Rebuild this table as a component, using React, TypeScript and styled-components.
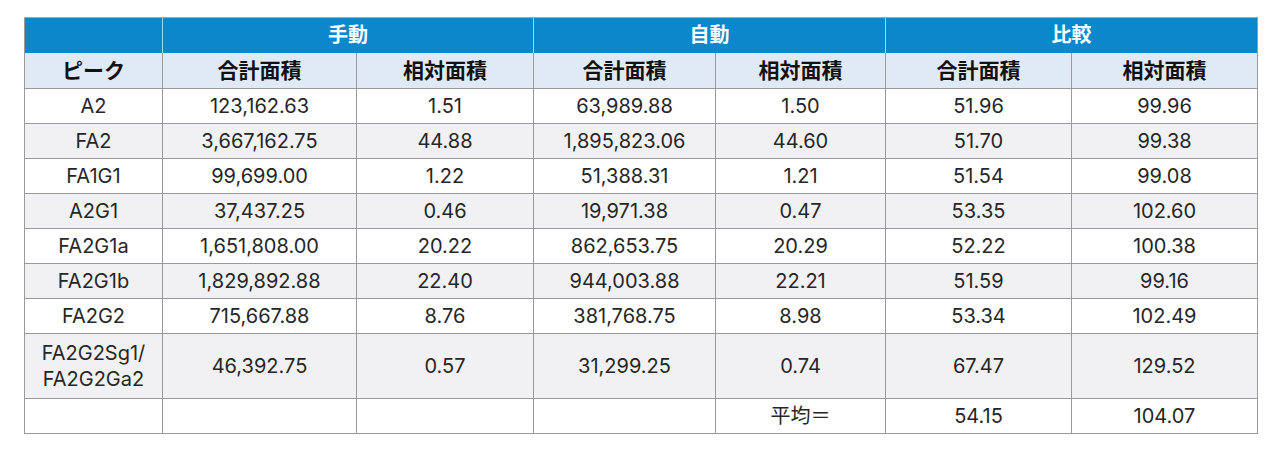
import * as React from 'react';
import styled, { createGlobalStyle } from 'styled-components';

const GlobalStyle = createGlobalStyle`
    body {
        margin: 0;
        background: white;
        font-family: Inter, 'Noto Sans CJK JP', sans-serif;
        color: #222;
    }
`;

const Page = styled.div`
    padding: 17px 0 0 24px;
`;

const Table = styled.table`
    border-collapse: collapse;
    table-layout: fixed;
    width: 1233px;
    font-size: 20px;
`;

const GroupRow = styled.tr`
    height: 35px;
    background: #0a88cb;
`;

const GroupCell = styled.th`
    color: white;
    font-weight: 700;
    font-size: 20px;
    border-left: 1px solid #8fe0f5;
    border-top: 1px solid #7fb4d4;
    padding: 0;
    line-height: 1;
    &:first-child {
        border-left: 1px solid #9a9a9a;
    }
    &:last-child {
        border-right: 1px solid #9a9a9a;
    }
`;

const SubRow = styled.tr`
    height: 36px;
    background: #dfeaf6;
`;

const SubCell = styled.th`
    font-weight: 700;
    font-size: 21px;
    line-height: 1;
    color: #111;
    border: 1px solid #9a9a9a;
    border-top: none;
    padding: 0;
`;

const Row = styled.tr<{ $shaded: boolean; $tall?: boolean }>`
    height: ${(p) => (p.$tall ? '65px' : '35px')};
    background: ${(p) => (p.$shaded ? '#f1f1f3' : 'white')};
`;

const Cell = styled.td`
    border: 1px solid #9a9a9a;
    text-align: center;
    padding: 0;
    line-height: 1.3;
    color: #262626;
`;

const widths = [138, 194, 177, 182, 170, 186, 186];

const rows: string[][] = [
    ['A2', '123,162.63', '1.51', '63,989.88', '1.50', '51.96', '99.96'],
    ['FA2', '3,667,162.75', '44.88', '1,895,823.06', '44.60', '51.70', '99.38'],
    ['FA1G1', '99,699.00', '1.22', '51,388.31', '1.21', '51.54', '99.08'],
    ['A2G1', '37,437.25', '0.46', '19,971.38', '0.47', '53.35', '102.60'],
    ['FA2G1a', '1,651,808.00', '20.22', '862,653.75', '20.29', '52.22', '100.38'],
    ['FA2G1b', '1,829,892.88', '22.40', '944,003.88', '22.21', '51.59', '99.16'],
    ['FA2G2', '715,667.88', '8.76', '381,768.75', '8.98', '53.34', '102.49'],
];

const subHeads = ['ピーク', '合計面積', '相対面積', '合計面積', '相対面積', '合計面積', '相対面積'];

export default function App() {
    return (
        <Page>
            <GlobalStyle />
            <Table>
                <colgroup>
                    {widths.map((w, i) => (
                        <col key={i} style={{ width: w }} />
                    ))}
                </colgroup>
                <thead>
                    <GroupRow>
                        <GroupCell />
                        <GroupCell colSpan={2}>手動</GroupCell>
                        <GroupCell colSpan={2}>自動</GroupCell>
                        <GroupCell colSpan={2}>比較</GroupCell>
                    </GroupRow>
                    <SubRow>
                        {subHeads.map((h, i) => (
                            <SubCell key={i}>{h}</SubCell>
                        ))}
                    </SubRow>
                </thead>
                <tbody>
                    {rows.map((r, i) => (
                        <Row key={i} $shaded={i % 2 === 1}>
                            {r.map((c, j) => (
                                <Cell key={j}>{c}</Cell>
                            ))}
                        </Row>
                    ))}
                    <Row $shaded $tall>
                        <Cell>
                            FA2G2Sg1/
                            <br />
                            FA2G2Ga2
                        </Cell>
                        <Cell>46,392.75</Cell>
                        <Cell>0.57</Cell>
                        <Cell>31,299.25</Cell>
                        <Cell>0.74</Cell>
                        <Cell>67.47</Cell>
                        <Cell>129.52</Cell>
                    </Row>
                    <Row $shaded={false}>
                        <Cell />
                        <Cell />
                        <Cell />
                        <Cell />
                        <Cell>平均＝</Cell>
                        <Cell>54.15</Cell>
                        <Cell>104.07</Cell>
                    </Row>
                </tbody>
            </Table>
        </Page>
    );
}
